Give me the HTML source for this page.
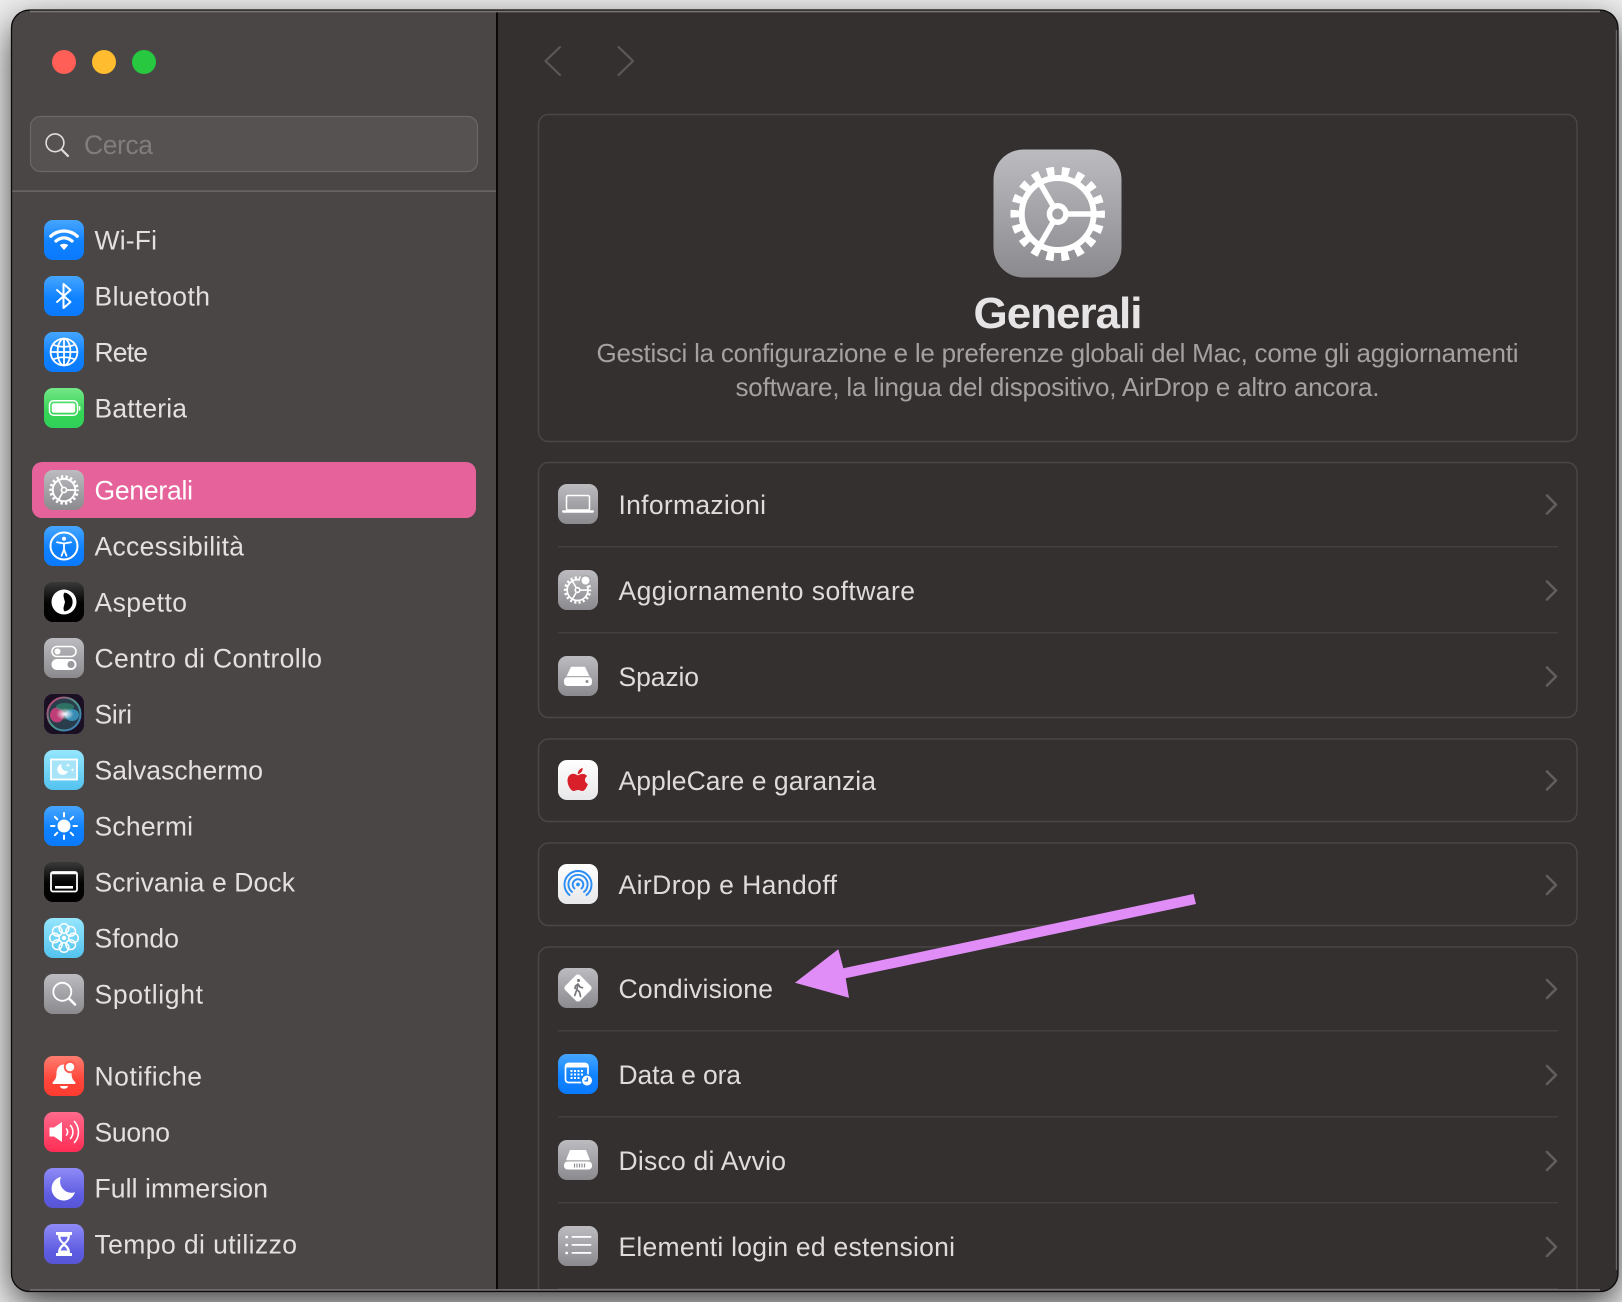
<!DOCTYPE html>
<html lang="it"><head><meta charset="utf-8"><title>Generali</title>
<style>
html,body{margin:0;padding:0;width:1622px;height:1302px;overflow:hidden;background:#eeeeee}
#sh{position:absolute;left:12px;top:10px;width:1606px;height:1281px;border-radius:18px;box-shadow:0 13px 36px rgba(0,0,0,.74)}
svg#m{position:absolute;left:0;top:0}
text{font-family:"Liberation Sans",sans-serif;font-size:26.5px;fill:#e3e0e0}
.r{font-size:26.5px;fill:#dedbdb}
.s{fill:none;stroke:#fff;stroke-width:2;stroke-linecap:round;stroke-linejoin:round}
.c{fill:none;stroke:#625e5e;stroke-width:2.6;stroke-linecap:round;stroke-linejoin:round}
.n{fill:none;stroke:#5c5858;stroke-width:2.2;stroke-linecap:round;stroke-linejoin:round}
.sep{fill:#433f3f}
.card{fill:none;stroke:#4a4646;stroke-width:1.5}
</style></head><body>
<div id="sh"></div>
<svg id="m" width="1622" height="1302" viewBox="0 0 1622 1302" xmlns="http://www.w3.org/2000/svg">
<defs>
<clipPath id="win"><rect x="11" y="10" width="1607" height="1281" rx="18"/></clipPath>
<linearGradient id="gb" x1="0" y1="0" x2="0" y2="1"><stop offset="0" stop-color="#46a6ff"/><stop offset=".55" stop-color="#0f82ff"/><stop offset="1" stop-color="#0a7aff"/></linearGradient>
<linearGradient id="gy" x1="0" y1="0" x2="0" y2="1"><stop offset="0" stop-color="#bcbcc0"/><stop offset="1" stop-color="#8b8b8f"/></linearGradient>
<linearGradient id="gn" x1="0" y1="0" x2="0" y2="1"><stop offset="0" stop-color="#74e787"/><stop offset=".6" stop-color="#35d557"/><stop offset="1" stop-color="#30d158"/></linearGradient>
<linearGradient id="gk" x1="0" y1="0" x2="0" y2="1"><stop offset="0" stop-color="#3a3a3a"/><stop offset=".5" stop-color="#050505"/><stop offset="1" stop-color="#000"/></linearGradient>
<linearGradient id="gc" x1="0" y1="0" x2="0" y2="1"><stop offset="0" stop-color="#95e6fc"/><stop offset="1" stop-color="#53c3ef"/></linearGradient>
<linearGradient id="gr" x1="0" y1="0" x2="0" y2="1"><stop offset="0" stop-color="#ff7d70"/><stop offset=".6" stop-color="#ff453a"/><stop offset="1" stop-color="#ff3b30"/></linearGradient>
<linearGradient id="gp" x1="0" y1="0" x2="0" y2="1"><stop offset="0" stop-color="#ff6a8c"/><stop offset="1" stop-color="#ff2d55"/></linearGradient>
<linearGradient id="gv" x1="0" y1="0" x2="0" y2="1"><stop offset="0" stop-color="#8f8bf7"/><stop offset=".7" stop-color="#5d5be0"/><stop offset="1" stop-color="#5856d6"/></linearGradient>
<linearGradient id="gw" x1="0" y1="0" x2="0" y2="1"><stop offset="0" stop-color="#fff"/><stop offset="1" stop-color="#e8e8ea"/></linearGradient>
<linearGradient id="gs" x1="0" y1="0" x2="1" y2="1"><stop offset="0" stop-color="#d8326f"/><stop offset=".5" stop-color="#4a9a8a"/><stop offset="1" stop-color="#3a7ac8"/></linearGradient>
<radialGradient id="gw2"><stop offset="0" stop-color="#fff"/><stop offset="1" stop-color="#fff" stop-opacity="0"/></radialGradient>
<g id="gear">
<circle cx="64" cy="64" r="43" fill="none" stroke="#fff" stroke-width="8.500" stroke-dasharray="7.500 7.510" stroke-dashoffset="3.750"/>
<circle cx="64" cy="64" r="36" fill="none" stroke="#fff" stroke-width="6"/>
<path d="M72 64H98M59.500 56 46.500 33.500M59.500 72 46.500 94.500" fill="none" stroke="#fff" stroke-width="5.500"/>
<circle cx="64" cy="64" r="8.200" fill="#a2a2a6" stroke="#fff" stroke-width="5.500"/>
</g>
<symbol id="i-wifi" viewBox="0 0 40 40"><rect width="40" height="40" rx="9" fill="url(#gb)"/><path class="s" style="stroke-width:3.300" d="M6.800 16.200C14.500 9.300 25.500 9.300 33.200 16.200M12 21C17 16.800 23 16.800 28 21"/><path fill="#fff" d="M15.800 25.200C18.200 23.300 21.800 23.300 24.200 25.200L20 30z"/></symbol>
<symbol id="i-bt" viewBox="0 0 40 40"><rect width="40" height="40" rx="9" fill="url(#gb)"/><path class="s" d="M13 14 26.500 26 19.500 32V8L26.500 14 13 26"/></symbol>
<symbol id="i-net" viewBox="0 0 40 40"><rect width="40" height="40" rx="9" fill="url(#gb)"/><g class="s" style="stroke-width:1.800"><circle cx="20" cy="20" r="13.400"/><ellipse cx="20" cy="20" rx="6.400" ry="13.400"/><path d="M20 6.600V33.400M6.600 20H33.400M9 12.500C15 15.500 25 15.500 31 12.500M9 27.500C15 24.500 25 24.500 31 27.500"/></g></symbol>
<symbol id="i-bat" viewBox="0 0 40 40"><rect width="40" height="40" rx="9" fill="url(#gn)"/><rect x="5.500" y="12.800" width="28" height="14.400" rx="4" fill="none" stroke="#fff" stroke-width="1.500"/><rect x="7.800" y="15.200" width="23.400" height="9.600" rx="2" fill="#fff"/><rect x="34.800" y="18" width="1.600" height="4.500" rx=".7" fill="#fff"/></symbol>
<symbol id="i-gen" viewBox="0 0 40 40"><rect width="40" height="40" rx="9" fill="url(#gy)"/><use href="#gear" transform="scale(.3125)"/></symbol>
<symbol id="i-acc" viewBox="0 0 40 40"><rect width="40" height="40" rx="9" fill="url(#gb)"/><circle class="s" cx="20" cy="20" r="13.500"/><circle cx="20" cy="12.800" r="2" fill="#fff"/><path class="s" style="stroke-width:1.800" d="M13 16.300 20 17.500 27 16.300M20 17.500V23.500M20 23.500 17.500 29.800M20 23.500 22.500 29.800"/></symbol>
<symbol id="i-asp" viewBox="0 0 40 40"><rect width="40" height="40" rx="9" fill="url(#gk)"/><circle cx="20" cy="20" r="12.500" fill="#fff"/><path fill="#000" d="M20.500 10.600A9.500 9.500 0 0 1 20.500 29.400C23 25 23 15 20.500 10.600z"/><path fill="#000" d="M20.500 10.600C18.500 13 20 16 21 20C20 24 18.500 27 20.500 29.400L26 20z"/></symbol>
<symbol id="i-cc" viewBox="0 0 40 40"><rect width="40" height="40" rx="9" fill="url(#gy)"/><rect x="8" y="8.500" width="24" height="10" rx="5" fill="none" stroke="#fff" stroke-width="1.600"/><circle cx="13.500" cy="13.500" r="3" fill="#fff"/><rect x="7.500" y="21" width="25" height="11" rx="5.500" fill="#fff"/><circle cx="27" cy="26.500" r="3.600" fill="#9a9a9e"/></symbol>
<symbol id="i-siri" viewBox="0 0 40 40"><rect width="40" height="40" rx="9" fill="#1b0f24"/><circle cx="20" cy="20" r="16.500" fill="#2a3d4c" stroke="url(#gs)" stroke-width="2"/><ellipse cx="13" cy="21" rx="7" ry="7.500" fill="#d8407f" opacity=".85"/><ellipse cx="28" cy="21" rx="7" ry="6" fill="#3a9ac8" opacity=".85"/><ellipse cx="21" cy="13" rx="9" ry="4" fill="#2f9a78" opacity=".55"/><ellipse cx="21" cy="20" rx="9" ry="6" fill="url(#gw2)"/></symbol>
<symbol id="i-ss" viewBox="0 0 40 40"><rect width="40" height="40" rx="9" fill="url(#gc)"/><rect x="7" y="9.500" width="26" height="20" fill="#a8e4f8" stroke="#fff" stroke-width="1.800"/><path fill="#fff" d="M17.500 14a5.500 5.500 0 1 0 6.500 7A5.500 5.500 0 0 1 17.500 14z"/><path fill="#fff" d="M24 13l.6 1.600 1.600.6-1.600.6-.6 1.600-.6-1.600-1.600-.6 1.600-.6zM28.500 18l.5 1.400 1.400.5-1.400.5-.5 1.400-.5-1.400-1.400-.5 1.400-.5z"/></symbol>
<symbol id="i-sun" viewBox="0 0 40 40"><rect width="40" height="40" rx="9" fill="url(#gb)"/><circle cx="20" cy="20" r="6.500" fill="#fff"/><path class="s" d="M20 7V10.500M20 29.500V33M7 20H10.500M29.500 20H33M10.800 10.800 13.300 13.300M26.700 26.700 29.200 29.200M10.800 29.200 13.300 26.700M26.700 13.300 29.200 10.800"/></symbol>
<symbol id="i-dock" viewBox="0 0 40 40"><rect width="40" height="40" rx="9" fill="url(#gk)"/><rect x="7" y="10" width="26" height="19.500" rx="2" fill="none" stroke="#fff" stroke-width="1.800"/><path fill="#fff" d="M7 10h26v2.200H7zM11 24h18v2.600H11z"/></symbol>
<symbol id="i-flo" viewBox="0 0 40 40"><rect width="40" height="40" rx="9" fill="url(#gc)"/><g fill="none" stroke="#fff" stroke-width="1.500"><circle cx="29.500" cy="20" r="4.800"/><circle cx="26.700" cy="26.700" r="4.800"/><circle cx="20" cy="29.500" r="4.800"/><circle cx="13.300" cy="26.700" r="4.800"/><circle cx="10.500" cy="20" r="4.800"/><circle cx="13.300" cy="13.300" r="4.800"/><circle cx="20" cy="10.500" r="4.800"/><circle cx="26.700" cy="13.300" r="4.800"/></g><circle cx="20" cy="20" r="2.200" fill="#fff"/></symbol>
<symbol id="i-spot" viewBox="0 0 40 40"><rect width="40" height="40" rx="9" fill="url(#gy)"/><circle class="s" cx="18.300" cy="17.800" r="9" style="stroke-width:1.800"/><path class="s" style="stroke-width:2.600" d="M25 24.500 31 30.500"/></symbol>
<symbol id="i-not" viewBox="0 0 40 40"><rect width="40" height="40" rx="9" fill="url(#gr)"/><path fill="#fff" d="M20 8.500c-4.500 0-7.500 3.500-7.500 8.500 0 4.500-1 6.500-3.600 9-.8.8-.3 2 .8 2h20.600c1.100 0 1.600-1.200.8-2-2.600-2.500-3.600-4.500-3.600-9C27.500 12 24.500 8.500 20 8.500z"/><path fill="#fff" d="M16 30h8a4 2.800 0 0 1-8 0z"/><circle cx="26" cy="11" r="6.200" fill="#ff5a4e"/><circle cx="26" cy="11" r="4.300" fill="#fff"/></symbol>
<symbol id="i-snd" viewBox="0 0 40 40"><rect width="40" height="40" rx="9" fill="url(#gp)"/><path fill="#fff" d="M5.500 15.500h4.500L18 10v20l-8-5.500H5.500z"/><path class="s" style="stroke-width:1.600" d="M22.500 17a4.500 4.500 0 0 1 0 6M26.500 13.500a10 10 0 0 1 0 13M30.500 9.500a16 16 0 0 1 0 21"/></symbol>
<symbol id="i-foc" viewBox="0 0 40 40"><rect width="40" height="40" rx="9" fill="url(#gv)"/><path fill="#fff" d="M17 8.800a12 12 0 1 0 14 15.500A11.500 11.500 0 0 1 17 8.800z"/></symbol>
<symbol id="i-time" viewBox="0 0 40 40"><rect width="40" height="40" rx="9" fill="url(#gv)"/><path fill="#fff" d="M12 8h16v3H12zM12 29h16v3H12z"/><path fill="#fff" d="M14 11h12c0 4-1.500 6.500-4.700 9 3.200 2.500 4.700 5 4.700 9H14c0-4 1.500-6.500 4.700-9C15.500 17.500 14 15 14 11z"/><path fill="#6f6cec" d="M16.300 12.800h7.400c-.4 2.500-1.700 4.500-3.700 5.800-2-1.300-3.300-3.300-3.700-5.800zM20 22c1.800 1.300 3 3 3.400 4.500h-6.800C17 25 18.200 23.300 20 22z"/></symbol>
<symbol id="i-lap" viewBox="0 0 40 40"><rect width="40" height="40" rx="9" fill="url(#gy)"/><rect x="8.500" y="11.500" width="23" height="14.500" rx="1.500" fill="none" stroke="#fff" stroke-width="1.500"/><rect x="4" y="26.300" width="32" height="2.400" rx="1.200" fill="#fff"/></symbol>
<symbol id="i-upd" viewBox="0 0 40 40"><rect width="40" height="40" rx="9" fill="url(#gy)"/><use href="#gear" transform="translate(1 1.500) scale(.29)"/><circle cx="27.500" cy="10.500" r="5.600" fill="#a8a8ac"/><circle cx="27.500" cy="10.500" r="4" fill="#fff"/></symbol>
<symbol id="i-hd" viewBox="0 0 40 40"><rect width="40" height="40" rx="9" fill="url(#gy)"/><path fill="#fff" stroke="#fff" stroke-width="1.500" stroke-linejoin="round" d="M13.500 11.500h13l4 8.500h-21z"/><rect x="6" y="21" width="28" height="9" rx="3.500" fill="#fff"/><rect x="9" y="20.200" width="22" height="1" fill="#9a9a9e"/><circle cx="29" cy="25.500" r="1.500" fill="#8f8f93"/></symbol>
<symbol id="i-apl" viewBox="0 0 40 40"><rect width="40" height="40" rx="9" fill="url(#gw)"/><path fill="#d81f2a" d="M20 15.400c1.700-.9 3.300-1.500 4.800-1.500 1.800 0 3.300.8 4.300 2.200-3.200 2-2.600 6.500.8 8-1 2.800-3.100 6.900-5.500 6.900-1.600 0-2.500-1-4.400-1s-2.800 1-4.400 1c-2.800 0-6.100-5.800-6.100-10.500 0-4.300 2.800-6.700 5.700-6.700 1.800 0 3.400 1 4.800 1.600z"/><path fill="#d81f2a" d="M19.700 14.200c0-3.200 2.100-5.600 5-6.200.2 3.300-2.100 5.800-5 6.200z"/></symbol>
<symbol id="i-air" viewBox="0 0 40 40"><rect width="40" height="40" rx="9" fill="url(#gw)"/><g fill="none" stroke="#2a8df5" stroke-width="1.900" stroke-linecap="round"><path d="M11.500 31A13.500 13.500 0 1 1 28.500 31"/><path d="M14 27.900A9.600 9.600 0 1 1 26 27.900"/><path d="M16.500 24.500A5.300 5.300 0 1 1 23.500 24.500"/></g><circle cx="20" cy="20.500" r="1.900" fill="#2a8df5"/></symbol>
<symbol id="i-shr" viewBox="0 0 40 40"><rect width="40" height="40" rx="9" fill="url(#gy)"/><rect x="9.500" y="9.500" width="21" height="21" rx="3" fill="#fff" transform="rotate(45 20 20)"/><circle cx="20.500" cy="12.500" r="1.500" fill="#77777b"/><path fill="none" stroke="#77777b" stroke-width="1.700" stroke-linecap="round" stroke-linejoin="round" d="M20 16 18.800 21.500 21.500 24 22.500 28.500M18.800 21.500 16.800 27.500M20 16 17.500 18 17 20.500M20 16 22 19 24.500 19.800"/></symbol>
<symbol id="i-cal" viewBox="0 0 40 40"><rect width="40" height="40" rx="9" fill="url(#gb)"/><rect x="7.500" y="9.500" width="22.500" height="19" rx="3" fill="none" stroke="#fff" stroke-width="1.700"/><path fill="#fff" d="M10 9h17.500a3 3 0 0 1 3 3v1.500H7V12a3 3 0 0 1 3-3z"/><g fill="#fff"><rect x="12.500" y="16" width="2" height="2"/><rect x="16" y="16" width="2" height="2"/><rect x="19.500" y="16" width="2" height="2"/><rect x="23" y="16" width="2" height="2"/><rect x="12.500" y="19.500" width="2" height="2"/><rect x="16" y="19.500" width="2" height="2"/><rect x="19.500" y="19.500" width="2" height="2"/><rect x="23" y="19.500" width="2" height="2"/><rect x="12.500" y="23" width="2" height="2"/><rect x="16" y="23" width="2" height="2"/><rect x="19.500" y="23" width="2" height="2"/></g><circle cx="29" cy="26.500" r="6.200" fill="#1480fb"/><circle cx="29" cy="26.500" r="5" fill="#fff"/><path fill="none" stroke="#1480fb" stroke-width="1.300" d="M29.300 23.500V26.800H26.500"/></symbol>
<symbol id="i-dsk" viewBox="0 0 40 40"><rect width="40" height="40" rx="9" fill="url(#gy)"/><path fill="#fff" stroke="#fff" stroke-width="1.500" stroke-linejoin="round" d="M12.500 10.800h15l3.500 8.700H9z"/><rect x="6" y="21.500" width="28" height="8" rx="3.500" fill="#fff"/><path stroke="#8f8f93" stroke-width="1.200" d="M16.500 23.500v4M19 23.500v4M21.500 23.500v4M24 23.500v4M26.500 23.500v4"/></symbol>
<symbol id="i-lst" viewBox="0 0 40 40"><rect width="40" height="40" rx="9" fill="url(#gy)"/><g fill="#fff"><circle cx="8.700" cy="11" r="1.400"/><circle cx="8.700" cy="19" r="1.400"/><circle cx="8.700" cy="27" r="1.400"/><rect x="13.500" y="10" width="20" height="1.800" rx=".9"/><rect x="13.500" y="18" width="20" height="1.800" rx=".9"/><rect x="13.500" y="26" width="20" height="1.800" rx=".9"/></g></symbol>
</defs>

<g clip-path="url(#win)">
<rect x="11" y="10" width="1607" height="1281" fill="#353030"/>
<rect x="11" y="10" width="485" height="1281" fill="#4a4645"/>
<rect x="496" y="10" width="2" height="1281" fill="#0a0808"/>

<!-- traffic lights -->
<circle cx="64" cy="62" r="12" fill="#ff5f57"/><circle cx="104" cy="62" r="12" fill="#febc2e"/><circle cx="144" cy="62" r="12" fill="#28c840"/>

<!-- search -->
<rect x="30.500" y="116.500" width="447" height="55" rx="10" fill="#565251" stroke="#6c6867" stroke-width="1.200"/>
<circle cx="55" cy="142.800" r="8.900" fill="none" stroke="#e0dedd" stroke-width="1.600"/>
<path d="M61.500 149.500 68 156" stroke="#e0dedd" stroke-width="2.200" stroke-linecap="round"/>
<text x="84" y="154" textLength="69" style="fill:#817d7c">Cerca</text>
<rect x="12" y="190.300" width="484" height="1.700" fill="#686463"/>

<!-- sidebar -->
<rect x="32" y="462" width="444" height="56" rx="10" fill="#e5639a"/>
<use href="#i-wifi" x="44" y="220" width="40" height="40"/><text x="94.500" y="249.500" textLength="62.500">Wi-Fi</text>
<use href="#i-bt" x="44" y="276" width="40" height="40"/><text x="94.500" y="305.500" textLength="115.500">Bluetooth</text>
<use href="#i-net" x="44" y="332" width="40" height="40"/><text x="94.500" y="361.500" textLength="53.500">Rete</text>
<use href="#i-bat" x="44" y="388" width="40" height="40"/><text x="94.500" y="417.500" textLength="92.500">Batteria</text>
<use href="#i-gen" x="44" y="470" width="40" height="40"/><text x="94.500" y="499.500" textLength="98.500" style="fill:#fff">Generali</text>
<use href="#i-acc" x="44" y="526" width="40" height="40"/><text x="94.500" y="555.500" textLength="149.500">Accessibilità</text>
<use href="#i-asp" x="44" y="582" width="40" height="40"/><text x="94.500" y="611.500" textLength="92.500">Aspetto</text>
<use href="#i-cc" x="44" y="638" width="40" height="40"/><text x="94.500" y="667.500" textLength="227.500">Centro di Controllo</text>
<use href="#i-siri" x="44" y="694" width="40" height="40"/><text x="94.500" y="723.500" textLength="37.500">Siri</text>
<use href="#i-ss" x="44" y="750" width="40" height="40"/><text x="94.500" y="779.500" textLength="168.500">Salvaschermo</text>
<use href="#i-sun" x="44" y="806" width="40" height="40"/><text x="94.500" y="835.500" textLength="98.500">Schermi</text>
<use href="#i-dock" x="44" y="862" width="40" height="40"/><text x="94.500" y="891.500" textLength="200.500">Scrivania e Dock</text>
<use href="#i-flo" x="44" y="918" width="40" height="40"/><text x="94.500" y="947.500" textLength="84.500">Sfondo</text>
<use href="#i-spot" x="44" y="974" width="40" height="40"/><text x="94.500" y="1003.500" textLength="108.500">Spotlight</text>
<use href="#i-not" x="44" y="1056" width="40" height="40"/><text x="94.500" y="1085.500" textLength="107.500">Notifiche</text>
<use href="#i-snd" x="44" y="1112" width="40" height="40"/><text x="94.500" y="1141.500" textLength="75.500">Suono</text>
<use href="#i-foc" x="44" y="1168" width="40" height="40"/><text x="94.500" y="1197.500" textLength="173.500">Full immersion</text>
<use href="#i-time" x="44" y="1224" width="40" height="40"/><text x="94.500" y="1253.500" textLength="202.500">Tempo di utilizzo</text>

<!-- nav -->
<path class="n" d="M560 47 545.500 61 560 75M618.500 47 633 61 618.500 75"/>

<!-- hero -->
<rect x="538.500" y="114.500" width="1038.500" height="327" rx="10" class="card"/>
<rect x="993.500" y="149.500" width="128" height="128" rx="30" fill="url(#gy)"/>
<use href="#gear" transform="translate(993.700 150)"/>
<text x="973.500" y="328" textLength="169" style="font-size:44px;font-weight:700;fill:#e6e4e4">Generali</text>
<text x="596.500" y="362" textLength="922" style="font-size:26px;fill:#a5a1a1">Gestisci la configurazione e le preferenze globali del Mac, come gli aggiornamenti</text>
<text x="735.500" y="396" textLength="644" style="font-size:26px;fill:#a5a1a1">software, la lingua del dispositivo, AirDrop e altro ancora.</text>

<!-- cards -->
<rect x="538.500" y="462.500" width="1038.500" height="255" rx="10" class="card"/>
<rect x="538.500" y="739" width="1038.500" height="82.500" rx="10" class="card"/>
<rect x="538.500" y="843" width="1038.500" height="82.500" rx="10" class="card"/>
<rect x="538.500" y="947" width="1038.500" height="400" rx="10" class="card"/>
<g class="sep"><rect x="558" y="546" width="1000" height="1.500"/><rect x="558" y="632" width="1000" height="1.500"/><rect x="558" y="1030" width="1000" height="1.500"/><rect x="558" y="1116" width="1000" height="1.500"/><rect x="558" y="1202" width="1000" height="1.500"/><rect x="558" y="1288" width="1000" height="1.500"/></g>

<use href="#i-lap" x="558" y="484" width="40" height="40"/><text class="r" x="618.500" y="514" textLength="147.500">Informazioni</text>
<use href="#i-upd" x="558" y="570" width="40" height="40"/><text class="r" x="618.500" y="600" textLength="296.500">Aggiornamento software</text>
<use href="#i-hd" x="558" y="656" width="40" height="40"/><text class="r" x="618.500" y="686" textLength="80.500">Spazio</text>
<use href="#i-apl" x="558" y="760" width="40" height="40"/><text class="r" x="618.500" y="790" textLength="257.500">AppleCare e garanzia</text>
<use href="#i-air" x="558" y="864" width="40" height="40"/><text class="r" x="618.500" y="894" textLength="218.500">AirDrop e Handoff</text>
<use href="#i-shr" x="558" y="968" width="40" height="40"/><text class="r" x="618.500" y="998" textLength="154.500">Condivisione</text>
<use href="#i-cal" x="558" y="1054" width="40" height="40"/><text class="r" x="618.500" y="1084" textLength="122.500">Data e ora</text>
<use href="#i-dsk" x="558" y="1140" width="40" height="40"/><text class="r" x="618.500" y="1170" textLength="167.500">Disco di Avvio</text>
<use href="#i-lst" x="558" y="1226" width="40" height="40"/><text class="r" x="618.500" y="1256" textLength="336.500">Elementi login ed estensioni</text>

<path class="c" d="M1547 495.500 1556 504.500 1547 513.500M1547 581.500 1556 590.500 1547 599.500M1547 667.500 1556 676.500 1547 685.500M1547 771.500 1556 780.500 1547 789.500M1547 876 1556 885 1547 894M1547 980 1556 989 1547 998M1547 1066 1556 1075 1547 1084M1547 1152 1556 1161 1547 1170M1547 1238 1556 1247 1547 1256"/>

<!-- edge highlights -->
<rect x="30" y="10.500" width="1570" height="1.800" fill="#7b7777"/>
<rect x="30" y="1289" width="1570" height="1.800" fill="#6f6b6b"/>
<rect x="1615.800" y="30" width="1.500" height="1240" fill="#6a6666"/>
</g>

<!-- window edges -->
<rect x="11.500" y="10" width="1606.500" height="1281.500" rx="18" fill="none" stroke="#0c0a0a" stroke-width="1.300"/>

<!-- annotation arrow -->
<path fill="#e08df8" d="M795 982.700 838.300 949.300 843.300 968.300 1193.500 894 1196 904 845.700 978.300 849 997.700z"/>
</svg>
</body></html>
